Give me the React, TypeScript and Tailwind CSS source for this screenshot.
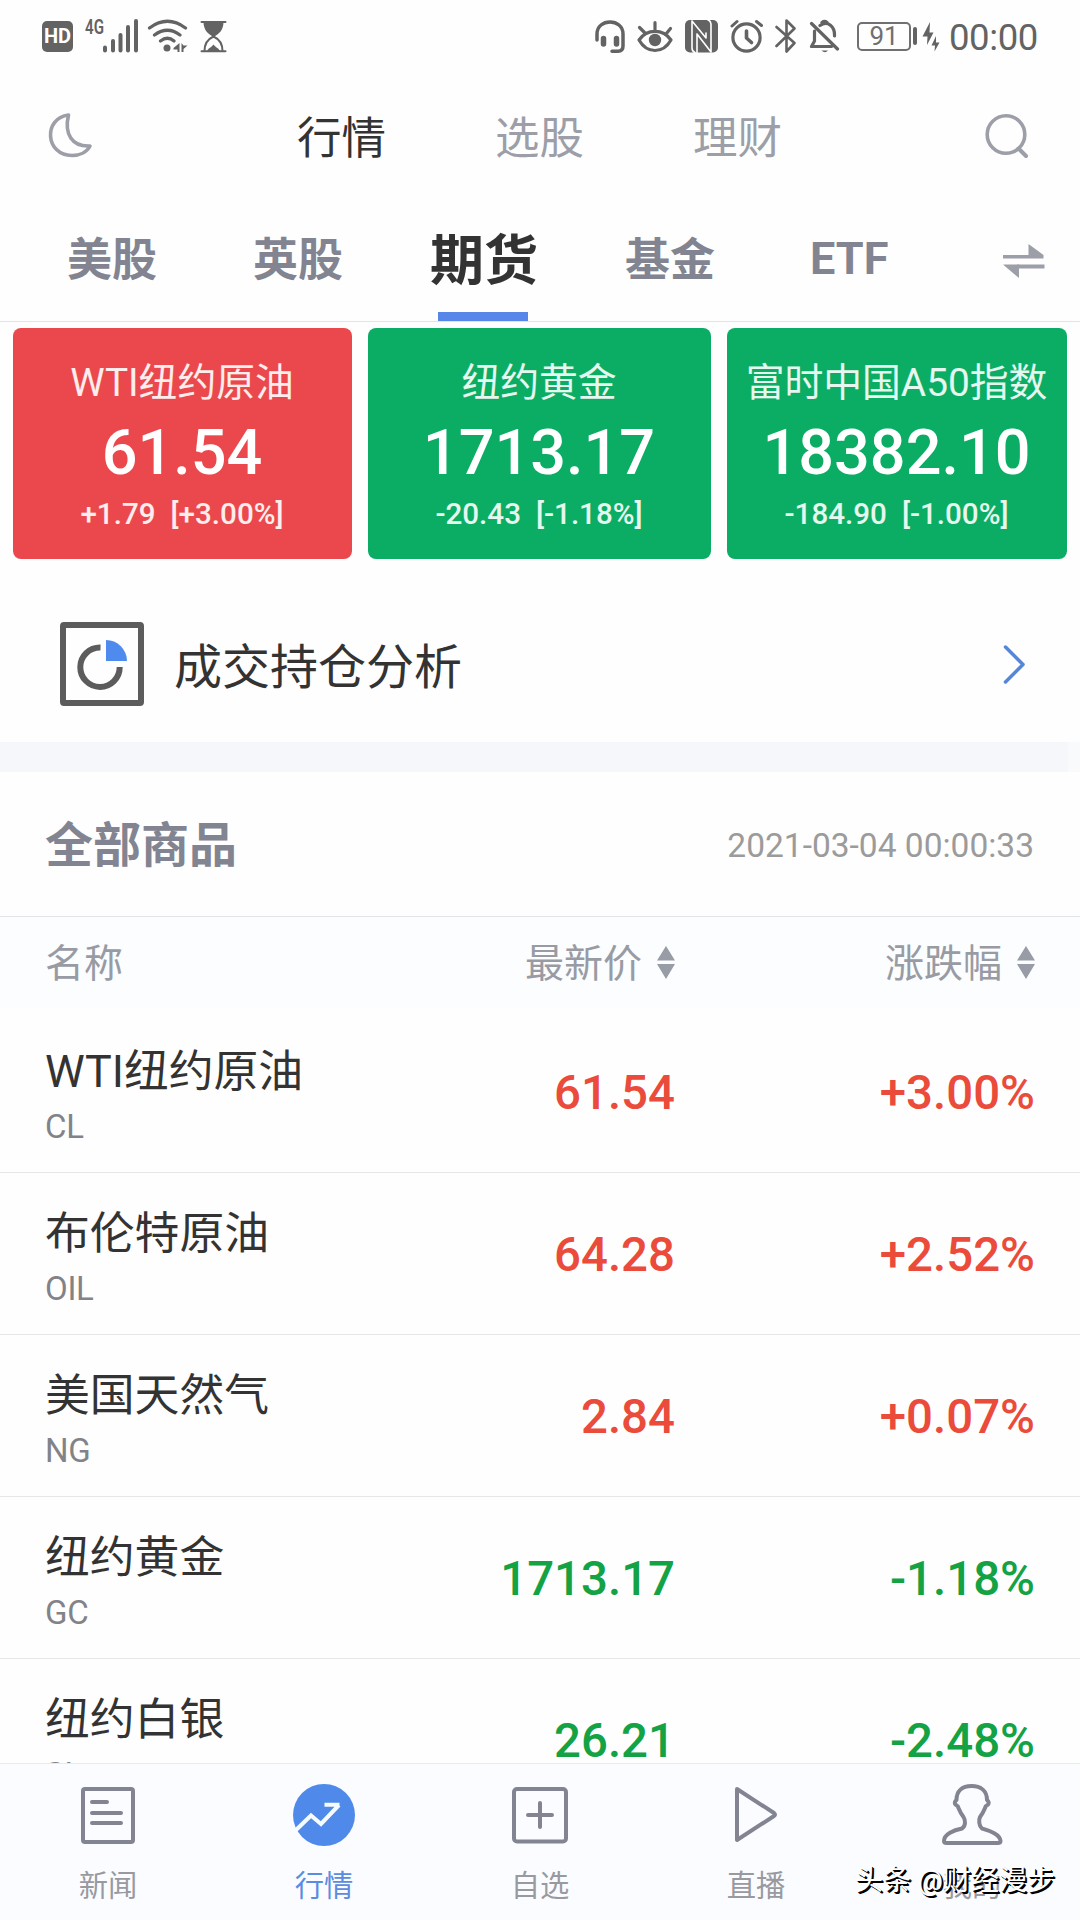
import React from "react";

const GREY = "#828591";
const STATUS = "#636363";

type GlyphProps = { box: string; className: string; children: React.ReactNode };

function Glyph({ box, className, children }: GlyphProps) {
  return (
    <svg viewBox={box} className={className} fill="none" strokeLinecap="round" strokeLinejoin="round">
      {children}
    </svg>
  );
}

function StatusBar() {
  return (
    <div className="flex h-[72px] shrink-0 items-center text-[#636363]">
      <div className="ml-[42px] flex h-[31px] w-[31px] items-center justify-center rounded-[5px] bg-[#636363] text-[20px] leading-none font-bold text-white">
        HD
      </div>
      <span className="ml-[12px] mb-[19px] w-[18px] origin-left scale-x-[0.72] text-[21px] leading-[18px] font-semibold">4G</span>
      <Glyph box="103 19 36 34" className="h-[34px] w-[36px]">
        <path d="M105 47.500v3M113 41v9.500M120.500 35v15.500M128 27v23.500M136 21v29.500" stroke={STATUS} strokeWidth="4" />
      </Glyph>
      <Glyph box="147 19 41 34" className="ml-[8px] h-[34px] w-[41px]">
        <path d="M149.500 28Q167.500 14.500 185.500 28M154.500 35Q167.500 25.500 180 35M160.500 41Q167.500 35.500 174 41" stroke={STATUS} strokeWidth="3.200" />
        <circle cx="167" cy="48" r="3.500" fill={STATUS} />
        <path d="M173.500 48L179.500 43V52H177.500V49.500H173.500ZM181.500 43L183.500 45.500H187.500L183.500 49V52H181.500Z" fill={STATUS} />
      </Glyph>
      <Glyph box="200 19 27 34" className="ml-[12px] h-[34px] w-[27px]">
        <path d="M201.500 22H225.500M201.500 51.200H225.500" stroke={STATUS} strokeWidth="2" />
        <path d="M203.500 22H223.500C223.500 30 219 34 213.500 37C208 34 203.500 30 203.500 22Z" fill={STATUS} />
        <path d="M213.500 36.500C208 39 204.500 44 204.500 51M213.500 36.500C219 39 222.500 44 222.500 51" stroke={STATUS} strokeWidth="2" />
        <path d="M207 51C209 47.500 212 47 213.500 44.500C215 47 218 47.500 220 51Z" fill={STATUS} />
      </Glyph>
      <div className="ml-auto flex items-center">
        <Glyph box="594 19 32 34" className="h-[34px] w-[32px]">
          <path d="M597 40V34C597 18 623 18 623 34V46Q623 51.200 618 51.200H612" stroke={STATUS} strokeWidth="3.500" />
          <path d="M603.500 38.500V44M616.500 38.500V44" stroke={STATUS} strokeWidth="5.500" />
        </Glyph>
        <Glyph box="637 19 37 34" className="ml-[11px] h-[34px] w-[37px]">
          <path d="M639 40C647 28.500 663 28.500 671 40C663 54 647 54 639 40ZM655 22.500V30M639.500 27.500L645.500 33.500M670.500 28.500L666 34" stroke={STATUS} strokeWidth="3.200" />
          <circle cx="655" cy="40" r="6.200" fill={STATUS} />
        </Glyph>
        <Glyph box="685 19 34 34" className="ml-[11px] h-[34px] w-[34px]">
          <rect x="685" y="20" width="33" height="32.500" rx="5" fill={STATUS} />
          <path d="M692 21V48Q692 51.500 695 52.500M692 21L706 38V33M711 52L697 34V53M711 52V25Q711 21 708 20" stroke="white" strokeWidth="1.600" />
        </Glyph>
        <Glyph box="730 19 34 34" className="ml-[11px] h-[34px] w-[34px]">
          <circle cx="746.500" cy="37.500" r="13.600" stroke={STATUS} strokeWidth="3.200" />
          <path d="M732 26L737 21.500M761.500 25.500L756.500 21.500" stroke={STATUS} strokeWidth="3" />
          <path d="M746.500 31V38L751.500 42.500" stroke={STATUS} strokeWidth="3.600" />
        </Glyph>
        <Glyph box="774 19 23 34" className="ml-[10px] h-[34px] w-[23px]">
          <path d="M776.500 27L794.500 43L786.500 51.500V20.500L794.500 28.500L776.500 46" stroke={STATUS} strokeWidth="2.600" />
        </Glyph>
        <Glyph box="809 19 31 34" className="ml-[12px] h-[34px] w-[31px]">
          <path d="M811.500 23.500L837.500 49M814.500 31V41L811.500 46.500H831.500M820 25.500C828 20 835 27 834.500 36M822 22.500Q824.500 20.500 827 22.500" stroke={STATUS} strokeWidth="3.200" />
          <path d="M821.500 50.500H828Q825 54 821.500 50.500Z" fill={STATUS} />
        </Glyph>
        <div className="ml-[17px] flex h-[29px] w-[54px] items-center justify-center rounded-[5px] border-2 border-[#707070] text-[26px] leading-none text-[#707070]">
          91
        </div>
        <div className="ml-[2px] h-[18px] w-[4px] rounded-full bg-[#636363]" />
        <Glyph box="923 19 18 34" className="ml-[5px] h-[34px] w-[18px]">
          <path d="M931 22L923.500 36.500H928.500L928 45L934.500 32.500H930.500ZM937 36L932.500 45.500H936L935.500 51.500L940.500 42.500H937Z" fill={STATUS} />
        </Glyph>
        <span className="mt-[4px] ml-[9px] w-[131px] text-[36.500px] leading-[40px] tracking-[-0.400px]">00:00</span>
      </div>
    </div>
  );
}

function TopNav() {
  return (
    <div className="flex h-[126px] shrink-0 items-center pt-[2px] text-[44.500px] text-[#9c9ea8]">
      <Glyph box="46 111 48 48" className="ml-[46px] h-[48px] w-[48px]">
        <path d="M68.500 114C43 117 45 154.500 72 154.500C80 154.500 87 151 90 145C72 146 64 133 68.500 114Z" stroke="#9c9ea8" strokeWidth="3.600" />
      </Glyph>
      <span className="mt-[6px] ml-[203px] w-[89px] leading-[60px] whitespace-nowrap text-[#333333]">行情</span>
      <span className="mt-[6px] ml-[109px] w-[89px] leading-[60px] whitespace-nowrap">选股</span>
      <span className="mt-[6px] ml-[109px] w-[89px] leading-[60px] whitespace-nowrap">理财</span>
      <Glyph box="984 112 48 48" className="mr-[48px] ml-auto h-[48px] w-[48px]">
        <circle cx="1006" cy="134.500" r="18.800" stroke="#9c9ea8" strokeWidth="3.600" />
        <path d="M1018.500 148.500L1026 156" stroke="#9c9ea8" strokeWidth="4" />
      </Glyph>
    </div>
  );
}

function MarketTabs() {
  return (
    <div className="flex h-[124px] shrink-0 border-b border-[#e2e4e8] text-[45px] leading-[125px] font-bold whitespace-nowrap text-[#828591]">
      <span className="ml-[67px] w-[90px]">美股</span>
      <span className="ml-[96px] w-[90px]">英股</span>
      <div className="ml-[87px] flex w-[108px] flex-col items-center text-[54px] text-[#333333]">
        <span className="h-[114px] leading-[127px]">期货</span>
        <div className="mr-[2px] h-[9px] w-[90px] bg-[#5686e8]" />
      </div>
      <span className="ml-[87px] w-[90px]">基金</span>
      <span className="ml-[95px] w-[78px] leading-[122px]">ETF</span>
      <Glyph box="1002 243 44 38" className="mt-[43px] ml-[114px] h-[38px] w-[44px]">
        <path d="M1003 257H1028.500V246L1043.500 257V260.500H1003ZM1044.500 266.500H1019V280L1003.500 267V266.500Z" fill="#9c9ea8" />
        <path d="M1017 268.500H1044.500" stroke="#9c9ea8" strokeWidth="4" strokeLinecap="butt" />
      </Glyph>
    </div>
  );
}

const cards = [
  { name: "WTI纽约原油", price: "61.54", diff: "+1.79", pct: "[+3.00%]", cls: "w-[339px] bg-[#ea484c]" },
  { name: "纽约黄金", price: "1713.17", diff: "-20.43", pct: "[-1.18%]", cls: "ml-[16px] w-[343px] bg-[#0aad63]" },
  { name: "富时中国A50指数", price: "18382.10", diff: "-184.90", pct: "[-1.00%]", cls: "ml-[16px] w-[340px] bg-[#0aad63]" },
];

function Cards() {
  return (
    <div className="mt-[6px] ml-[13px] flex h-[231px] shrink-0">
      {cards.map((c) => (
        <div key={c.name} className={`flex flex-col items-center rounded-[8px] whitespace-nowrap text-white ${c.cls}`}>
          <span className="mt-[30px] mr-px h-[50px] text-[38.800px] leading-[50px] text-white/90">{c.name}</span>
          <span className="mt-[10px] mr-px h-[70px] text-[63px] leading-[70px] font-medium">{c.price}</span>
          <div className="mt-[6px] mr-px flex h-[40px] gap-[15px] text-[29.600px] leading-[40px] font-medium text-white/90">
            <span>{c.diff}</span>
            <span>{c.pct}</span>
          </div>
        </div>
      ))}
    </div>
  );
}

function Analysis() {
  return (
    <div className="flex h-[183px] shrink-0 items-center pt-[27px]">
      <Glyph box="60 622 84 84" className="ml-[60px] h-[84px] w-[84px]">
        <rect x="63" y="625" width="78" height="78" rx="1" stroke="#5c5c5c" strokeWidth="6" />
        <path d="M100.500 647.500A19.700 19.700 0 1 0 119.700 667" stroke="#5c5c5c" strokeWidth="6" strokeLinecap="butt" />
        <path d="M106 640V661H127A21 21 0 0 0 106 640Z" fill="#4f8bee" />
      </Glyph>
      <span className="mt-[8px] ml-[30px] text-[48px] leading-[60px] text-[#333333]">成交持仓分析</span>
      <Glyph box="1002 642 24 43" className="mr-[54px] ml-auto h-[43px] w-[24px]">
        <path d="M1005.500 646L1023 663.500L1005.500 681" stroke="#5686d8" strokeWidth="3.500" />
      </Glyph>
    </div>
  );
}

function SortArrows() {
  return (
    <svg viewBox="0 0 18 33" className="mb-[2px] ml-[15px] h-[33px] w-[18px]" fill="#989ca6">
      <path d="M9 0L18 14.500H0ZM0 18H18L9 33Z" />
    </svg>
  );
}

const rows = [
  { name: "WTI纽约原油", code: "CL", price: "61.54", pct: "+3.00%", cls: "text-[#eb4b3a]" },
  { name: "布伦特原油", code: "OIL", price: "64.28", pct: "+2.52%", cls: "text-[#eb4b3a]" },
  { name: "美国天然气", code: "NG", price: "2.84", pct: "+0.07%", cls: "text-[#eb4b3a]" },
  { name: "纽约黄金", code: "GC", price: "1713.17", pct: "-1.18%", cls: "text-[#13a244]" },
  { name: "纽约白银", code: "SI", price: "26.21", pct: "-2.48%", cls: "text-[#13a244]" },
];

function Commodities() {
  return (
    <div className="flex min-h-0 flex-1 flex-col overflow-hidden">
      <div className="flex h-[145px] shrink-0 items-center justify-between border-b border-[#e2e4e8] pt-[4px] pr-[46px] pl-[45px]">
        <span className="text-[48px] leading-[60px] font-bold text-[#828591]">全部商品</span>
        <span className="text-[33.500px] leading-[60px] text-[#9b9b9b]">2021-03-04 00:00:33</span>
      </div>
      <div className="mb-[3px] flex h-[91px] shrink-0 items-center bg-[#fbfdff] pt-[2px] pl-[45px] text-[39px] leading-[60px] text-[#999ba4]">
        <span className="w-[300px]">名称</span>
        <div className="flex w-[330px] items-center justify-end">
          最新价
          <SortArrows />
        </div>
        <div className="flex w-[360px] items-center justify-end">
          涨跌幅
          <SortArrows />
        </div>
      </div>
      {rows.map((r) => (
        <div key={r.code} className="flex h-[162px] shrink-0 items-center border-b border-[#e6e6e8] pl-[45px]">
          <div className="flex h-full w-[300px] flex-col whitespace-nowrap">
            <span className="mt-[31px] h-[60px] text-[44.800px] leading-[60px] text-[#333333]">{r.name}</span>
            <span className="mt-[5px] text-[33px] leading-[40px] tracking-[-0.300px] text-[#828388]">{r.code}</span>
          </div>
          <span className={`mt-[3px] w-[330px] text-right text-[47.400px] leading-[60px] font-medium ${r.cls}`}>{r.price}</span>
          <span className={`mt-[3px] w-[360px] text-right text-[47.400px] leading-[60px] font-medium ${r.cls}`}>{r.pct}</span>
        </div>
      ))}
    </div>
  );
}

const navItems = [
  {
    label: "新闻",
    icon: (
      <Glyph box="77 1783 62 64" className="h-[64px] w-[62px]">
        <rect x="83" y="1789" width="50" height="53" rx="2" stroke={GREY} strokeWidth="4" />
        <path d="M92 1802H107M92 1813H121M92 1823H121" stroke={GREY} strokeWidth="4" />
      </Glyph>
    ),
  },
  {
    label: "行情",
    icon: (
      <Glyph box="293 1783 62 64" className="h-[64px] w-[62px]">
        <circle cx="324" cy="1815" r="31" fill="#4f8aea" />
        <path d="M296 1830L311 1815.500L321 1824L339 1805M324.500 1804.800H339.500" stroke="#f5fbff" strokeWidth="4" strokeLinecap="butt" strokeLinejoin="miter" />
      </Glyph>
    ),
  },
  {
    label: "自选",
    icon: (
      <Glyph box="509 1783 62 64" className="h-[64px] w-[62px]">
        <rect x="514" y="1789" width="52" height="52.500" rx="3" stroke={GREY} strokeWidth="4" />
        <path d="M528 1815H552M540 1803V1827" stroke={GREY} strokeWidth="4" />
      </Glyph>
    ),
  },
  {
    label: "直播",
    icon: (
      <Glyph box="725 1783 62 64" className="h-[64px] w-[62px]">
        <path d="M737 1789L774 1813Q776 1814.500 774 1816L737 1840Z" stroke={GREY} strokeWidth="4" />
      </Glyph>
    ),
  },
  {
    label: "我的",
    icon: (
      <Glyph box="941 1783 62 64" className="h-[64px] w-[62px]">
        <path d="M944 1841C944 1834 954 1830 962 1828.500C966 1826 965.500 1820 963.500 1817C959.500 1812 958.500 1807 957.500 1806C955 1805 953.500 1802.500 956.500 1800C956.500 1791 962 1786 971.500 1786C981 1786 987 1791 987 1800C990 1802.500 988.500 1805 986 1806C985 1807 984 1812 980 1817C978.500 1820 979 1826 982 1828.500C990 1831 1000 1834 1000.500 1841Q1000.500 1843 998 1843H946.500Q944 1843 944 1841Z" stroke={GREY} strokeWidth="4" />
      </Glyph>
    ),
  },
];

function BottomNav() {
  return (
    <div className="relative grid h-[157px] shrink-0 grid-cols-5 border-t border-[#e6ebee] bg-[#fbfcff]">
      {navItems.map((n) => (
        <div key={n.label} className="flex flex-col items-center pt-[19px]">
          {n.icon}
          <span className={`mt-[19px] text-[29.300px] leading-[40px] ${n.label === "行情" ? "text-[#5b8ce0]" : "text-[#999a9f]"}`}>
            {n.label}
          </span>
        </div>
      ))}
      <span className="absolute top-[97px] right-[25px] text-[28px] leading-[40px] whitespace-nowrap text-white [text-shadow:1px_1px_0_#000,2px_2px_0_#000]">
        头条 @财经漫步
      </span>
    </div>
  );
}

export default function App() {
  return (
    <div className="flex h-[1920px] w-[1080px] flex-col overflow-hidden bg-[#fefefe] font-[Roboto,'Noto_Sans_CJK_SC',sans-serif]">
      <StatusBar />
      <TopNav />
      <MarketTabs />
      <Cards />
      <Analysis />
      <div className="flex h-[30px] shrink-0 bg-[#f5f7fa]">
        <div className="ml-auto w-[12px] bg-[#f9fafc]" />
      </div>
      <Commodities />
      <BottomNav />
    </div>
  );
}
